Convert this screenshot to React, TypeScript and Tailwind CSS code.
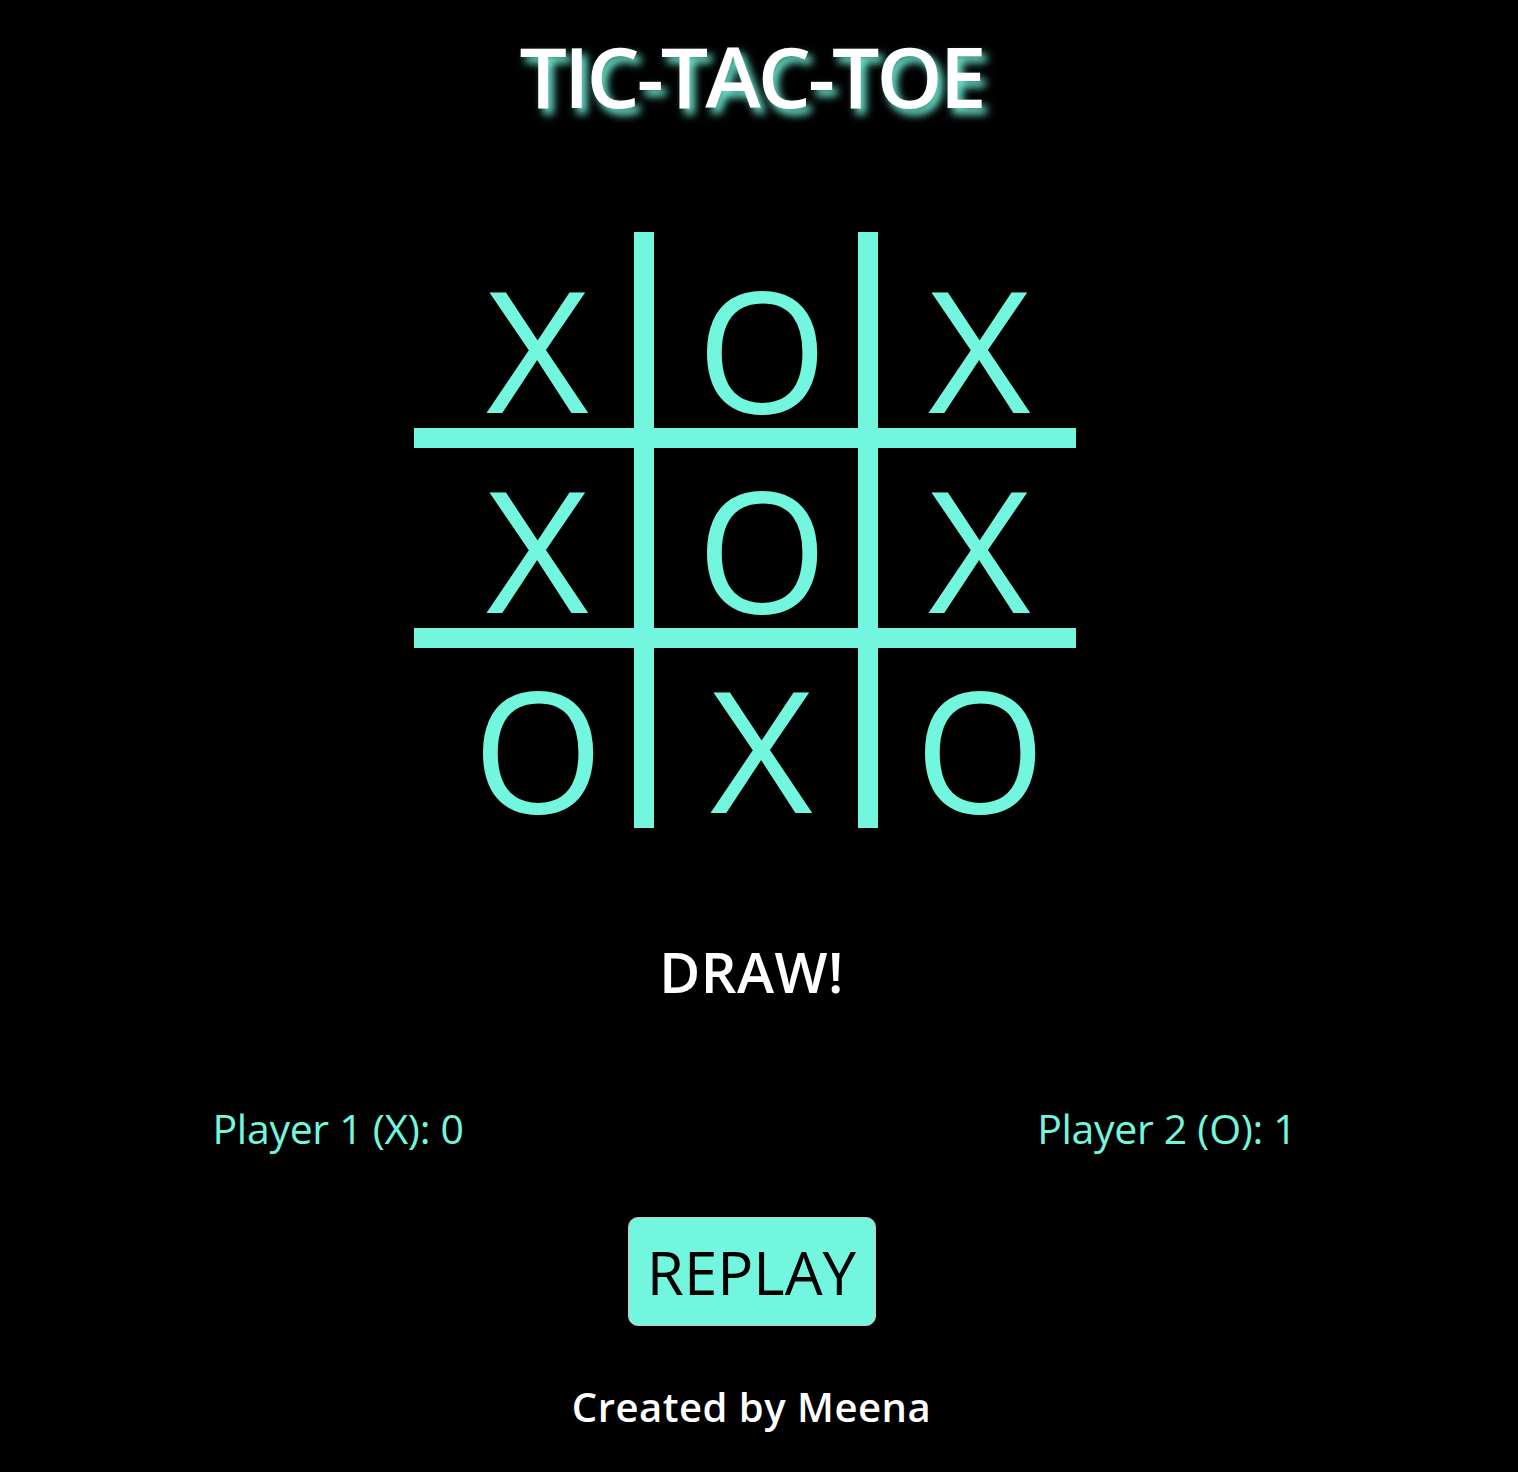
import React from "react";

const board = [
  ["X", "O", "X"],
  ["X", "O", "X"],
  ["O", "X", "O"],
];

const colClass = [
  "w-[240px] border-r-[20px] pl-[28px]",
  "w-[224px] border-r-[20px] pl-[12px]",
  "w-[198px] pl-[6px]",
];
const rowClass = [
  "h-[216px] border-b-[20px] pt-[32px]",
  "h-[200px] border-b-[20px] pt-[16px]",
  "h-[180px] pt-[16px]",
];

export default function App() {
  return (
    <div
      className="min-h-screen bg-black flex flex-col items-center pr-[15px]"
      style={{ fontFamily: '"Open Sans", "Noto Sans", sans-serif' }}
    >
      <h1 className="mt-[34px] text-[84px] leading-none font-semibold text-white tracking-[-3px] [text-shadow:5px_6px_9px_#72f7de]">
        TIC-TAC-TOE
      </h1>

      <div className="mt-[114px] mr-[13px] flex flex-col">
        {board.map((row, r) => (
          <div key={r} className="flex">
            {row.map((cell, c) => (
              <div
                key={c}
                className={`box-border flex justify-center border-[#72f7de] text-[#72f7de] text-[168px] leading-none ${colClass[c]} ${rowClass[r]}`}
              >
                <span className={cell === "X" ? "leading-none scale-x-[1.06]" : "leading-none"}>{cell}</span>
              </div>
            ))}
          </div>
        ))}
      </div>

      <div className="mt-[115px] text-[56px] leading-none font-semibold text-white tracking-[0.5px]">
        DRAW!
      </div>

      <div className="mt-[109px] w-[1090px] flex justify-between text-[41px] leading-none text-[#72f7de] tracking-[-0.3px]">
        <span className="ml-[6px]">Player 1 (X): 0</span>
        <span>Player 2 (O): 1</span>
      </div>

      <button className="mt-[68px] w-[248px] h-[109px] flex items-center justify-center rounded-[10px] border border-[#c8c8c8] bg-[#72f7de] text-black text-[60px] leading-none">
        REPLAY
      </button>

      <div className="mt-[61px] text-[40px] leading-none font-semibold text-white tracking-[0.5px]">
        Created by Meena
      </div>
    </div>
  );
}
